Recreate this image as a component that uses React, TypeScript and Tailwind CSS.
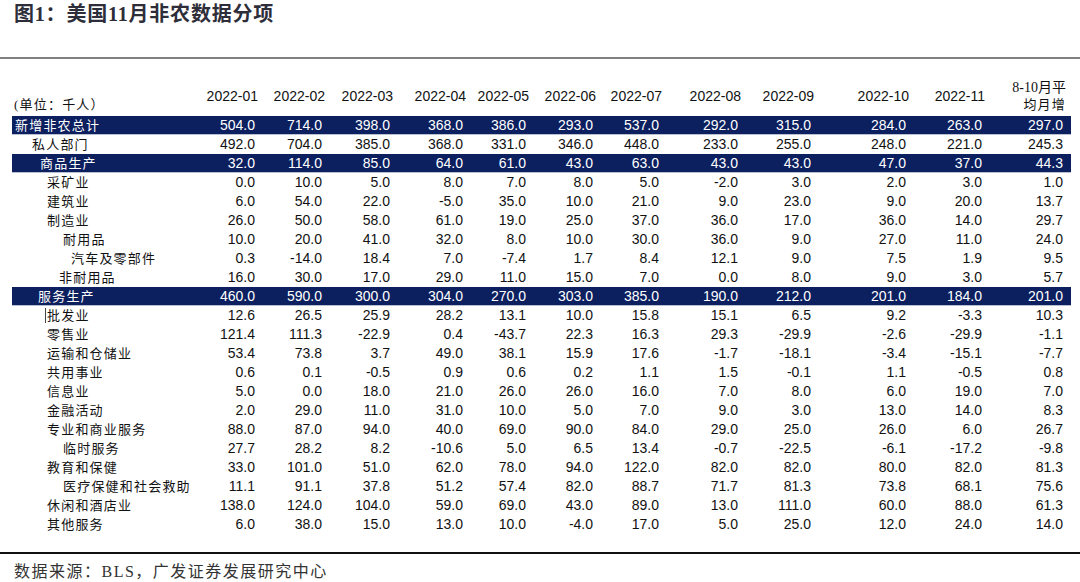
const months = [
  "2022-01",
  "2022-02",
  "2022-03",
  "2022-04",
  "2022-05",
  "2022-06",
  "2022-07",
  "2022-08",
  "2022-09",
  "2022-10",
  "2022-11",
];

type Row = { label: string; indent: string; band?: boolean; cursor?: boolean; values: string };

const rows: Row[] = [
  { label: "新增非农总计", indent: "pl-[3px]", band: true, values: "504.0 714.0 398.0 368.0 386.0 293.0 537.0 292.0 315.0 284.0 263.0 297.0" },
  { label: "私人部门", indent: "pl-[20px]", values: "492.0 704.0 385.0 368.0 331.0 346.0 448.0 233.0 255.0 248.0 221.0 245.3" },
  { label: "商品生产", indent: "pl-[28px]", band: true, values: "32.0 114.0 85.0 64.0 61.0 43.0 63.0 43.0 43.0 47.0 37.0 44.3" },
  { label: "采矿业", indent: "pl-[35px]", values: "0.0 10.0 5.0 8.0 7.0 8.0 5.0 -2.0 3.0 2.0 3.0 1.0" },
  { label: "建筑业", indent: "pl-[35px]", values: "6.0 54.0 22.0 -5.0 35.0 10.0 21.0 9.0 23.0 9.0 20.0 13.7" },
  { label: "制造业", indent: "pl-[35px]", values: "26.0 50.0 58.0 61.0 19.0 25.0 37.0 36.0 17.0 36.0 14.0 29.7" },
  { label: "耐用品", indent: "pl-[51px]", values: "10.0 20.0 41.0 32.0 8.0 10.0 30.0 36.0 9.0 27.0 11.0 24.0" },
  { label: "汽车及零部件", indent: "pl-[59px]", values: "0.3 -14.0 18.4 7.0 -7.4 1.7 8.4 12.1 9.0 7.5 1.9 9.5" },
  { label: "非耐用品", indent: "pl-[47px]", values: "16.0 30.0 17.0 29.0 11.0 15.0 7.0 0.0 8.0 9.0 3.0 5.7" },
  { label: "服务生产", indent: "pl-[26px]", band: true, values: "460.0 590.0 300.0 304.0 270.0 303.0 385.0 190.0 212.0 201.0 184.0 201.0" },
  { label: "批发业", indent: "pl-[33px]", cursor: true, values: "12.6 26.5 25.9 28.2 13.1 10.0 15.8 15.1 6.5 9.2 -3.3 10.3" },
  { label: "零售业", indent: "pl-[35px]", values: "121.4 111.3 -22.9 0.4 -43.7 22.3 16.3 29.3 -29.9 -2.6 -29.9 -1.1" },
  { label: "运输和仓储业", indent: "pl-[35px]", values: "53.4 73.8 3.7 49.0 38.1 15.9 17.6 -1.7 -18.1 -3.4 -15.1 -7.7" },
  { label: "共用事业", indent: "pl-[35px]", values: "0.6 0.1 -0.5 0.9 0.6 0.2 1.1 1.5 -0.1 1.1 -0.5 0.8" },
  { label: "信息业", indent: "pl-[35px]", values: "5.0 0.0 18.0 21.0 26.0 26.0 16.0 7.0 8.0 6.0 19.0 7.0" },
  { label: "金融活动", indent: "pl-[35px]", values: "2.0 29.0 11.0 31.0 10.0 5.0 7.0 9.0 3.0 13.0 14.0 8.3" },
  { label: "专业和商业服务", indent: "pl-[35px]", values: "88.0 87.0 94.0 40.0 69.0 90.0 84.0 29.0 25.0 26.0 6.0 26.7" },
  { label: "临时服务", indent: "pl-[51px]", values: "27.7 28.2 8.2 -10.6 5.0 6.5 13.4 -0.7 -22.5 -6.1 -17.2 -9.8" },
  { label: "教育和保健", indent: "pl-[35px]", values: "33.0 101.0 51.0 62.0 78.0 94.0 122.0 82.0 82.0 80.0 82.0 81.3" },
  { label: "医疗保健和社会救助", indent: "pl-[51px]", values: "11.1 91.1 37.8 51.2 57.4 82.0 88.7 71.7 81.3 73.8 68.1 75.6" },
  { label: "休闲和酒店业", indent: "pl-[35px]", values: "138.0 124.0 104.0 59.0 69.0 43.0 89.0 13.0 111.0 60.0 88.0 61.3" },
  { label: "其他服务", indent: "pl-[35px]", values: "6.0 38.0 15.0 13.0 10.0 -4.0 17.0 5.0 25.0 12.0 24.0 14.0" },
];

const cols =
  "grid grid-cols-[179px_67px_67px_68px_73px_63px_67px_66px_79px_73px_95px_76px_81px]";
const cjk = "font-['Liberation_Serif','Noto_Sans_CJK_SC',serif]";
const num = "font-['Liberation_Sans',Arial,sans-serif]";

export default function App() {
  return (
    <div className="w-[1080px] h-[582px] bg-white overflow-hidden">
      {/* Title */}
      <div className={`h-[57px] pt-[4px] pl-[14px] text-[20px] leading-[20px] tracking-[0.8px] font-bold text-[#2e2e3a] ${cjk}`}>
        图1：美国11月非农数据分项
      </div>
      <div className="h-[2px] bg-[#808080]" />

      {/* Table */}
      <div className="mt-[19px] ml-[12px] w-[1059px]">
        <div className={`${cols} h-[38px] text-[14px] leading-[17px] text-[#111]`}>
          <div className={`self-end pb-[3px] pl-[2px] text-[13px] tracking-[1.2px] ${cjk}`}>(单位：千人）</div>
          {months.map((m) => (
            <div key={m} className={`self-end pb-[11px] text-right ${num}`}>
              {m}
            </div>
          ))}
          <div className={`self-end pb-[3px] text-right ${cjk}`}>
            <div>8-10月平</div>
            <div className="text-[13px] tracking-[1.2px]">均月增</div>
          </div>
        </div>

        {rows.map((r) => (
          <div
            key={r.label}
            className={`${cols} h-[19px] text-[14px] leading-[19px] ${
              r.band ? "bg-[#0c1f5f] text-white border-b border-[#b7bfd0] leading-[18px]" : "text-[#111]"
            }`}
          >
            <div className={`${r.indent} ${cjk} text-[13px] tracking-[1.2px] flex items-center whitespace-nowrap`}>
              {r.cursor && <span className="inline-block w-px h-[15px] bg-[#444] mr-[1px]" />}
              {r.label}
            </div>
            {r.values.split(" ").map((v, i) => (
              <div key={i} className={`text-right pr-[3px] ${num}`}>
                {v}
              </div>
            ))}
          </div>
        ))}
      </div>

      {/* Footer */}
      <div className="mt-[18px] h-[2px] bg-[#111]" />
      <div className={`mt-[8px] pl-[14px] text-[16px] leading-[20px] tracking-[1.5px] text-[#333] ${cjk}`}>
        数据来源：BLS，广发证券发展研究中心
      </div>
    </div>
  );
}
